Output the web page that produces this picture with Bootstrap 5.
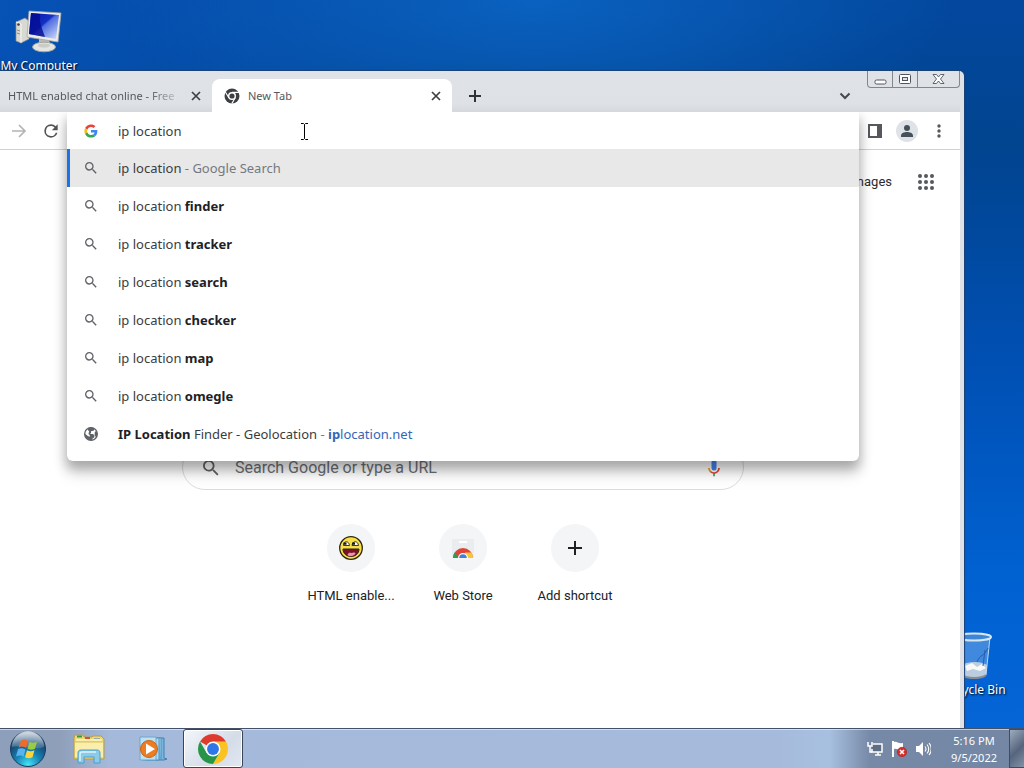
<!DOCTYPE html>
<html lang="en">
<head>
  <meta charset="UTF-8"/>
  <meta name="viewport" content="width=device-width, initial-scale=1.0"/>
  <title>New Tab</title>
  <!-- Bootstrap CSS -->
  <link
    rel="stylesheet"
    href="https://cdn.jsdelivr.net/npm/bootstrap@5.3.0/dist/css/bootstrap.min.css"
  />
  <style>
    body {
      font-family: "Noto Sans", "Open Sans", sans-serif;
      font-size: 13px;
      line-height: 20px;
      color: #202124;
      background: #0356bd;
    }
    button { color: inherit; }
    svg { display: block; flex: none; }

    /* Desktop */
    .desktop {
      background:
        radial-gradient(ellipse 420px 160px at 52% 0, rgba(12, 104, 200, .8), transparent),
        linear-gradient(to right, rgba(8, 88, 196, .6), transparent 45%),
        linear-gradient(to bottom, #03489f 0, #01448f 20%, #0050b4 50%, #0062d2 80%, #0564d6 100%);
    }
    .desk-icon {
      font-size: 12px;
      color: #fff;
      text-shadow: 1px 1px 2px #000;
      width: 78px;
    }
    .my-computer { top: 8px; left: 0; }
    .recycle-bin { right: 11px; bottom: 28px; }

    /* Browser window, pushed partly past the left screen edge */
    .browser {
      top: 71px;
      bottom: 0;
      left: -34px;
      right: 60px;
      background: #dee1e6;
      border-right: 4px solid #dee1e6;
      border-top-right-radius: 5px;
      box-shadow: 0 0 1px 1px #1c4374;
    }
    .tab-strip { height: 41px; padding-left: 6px; font-size: 11px; background: linear-gradient(#dfe2e6, #dee1e6 80%, #d5d8dd); }
    .tab { height: 33px; width: 240px; padding: 0 8px 0 12px; color: #54585c; }
    .tab.current { background: #fff; border-radius: 8px 8px 0 0; }
    .tab-title.faded {
      -webkit-mask-image: linear-gradient(to right, #000 84%, rgba(0, 0, 0, .3));
      mask-image: linear-gradient(to right, #000 84%, rgba(0, 0, 0, .3));
    }
    .icon-btn { width: 16px; height: 16px; padding: 0; border: 0; background: none; }
    .tab-search { margin-right: 14px; }
    .win-buttons { border: 1px solid #82868f; border-top: 0; border-radius: 0 0 4px 4px; height: 17px; }
    .win-buttons button { width: 25px; padding: 0; border: 0; border-right: 1px solid #82868f; background: none; }
    .win-buttons button:last-child { width: 41px; border-right: 0; }

    .toolbar { height: 38px; background: #fff; border-bottom: 1px solid #cfd1d4; padding: 0 5px 0 37px; }
    .tool-btn { width: 32px; height: 32px; padding: 0; border: 0; background: none; }
    .avatar { width: 22px; height: 22px; background: #dfe3e7; }

    /* Address box with its open suggestion list */
    .omnibox { z-index: 5; height: 37px; }
    .omni-panel {
      top: 0;
      background: #fff;
      border-radius: 0 0 6px 6px;
      box-shadow: 0 7px 12px 1px rgba(0, 0, 0, .28), 0 14px 16px rgba(0, 0, 0, .1);
      clip-path: inset(0 -30px -50px -30px);
      padding-bottom: 8px;
    }
    .omni-row { display: flex; align-items: center; width: 100%; gap: 19px; padding: 0 16px; color: #3a3c40; }
    .omni-input { height: 37px; }
    .omni-input input { border: 0; outline: 0; padding: 0; color: #3a3c40; }
    .suggestion {
      height: 38px;
      text-decoration: none;
      white-space: pre;
    }
    .suggestion b { color: #202124; }
    .suggestion.chosen { background: #e8e8e8; border-left: 3px solid #1a73e8; padding-left: 13px; }
    .suggestion .hint { color: #75797e; }
    .suggestion .site, .suggestion .site b { color: #3566b8; }

    /* New tab page */
    .ntp { background: #fff; font-family: Roboto, sans-serif; }
    .ntp-head { height: 64px; padding-right: 26px; }
    .ntp-head a { color: #2b2c2e; text-decoration: none; margin-right: 26px; }
    .search-box {
      width: 562px;
      max-width: 90%;
      height: 46px;
      margin-top: 230px;
      border: 1px solid #dadce0;
      border-radius: 24px;
      padding: 1px 19px 0 20px;
    }
    .search-box input { border: 0; outline: 0; padding: 0; font-size: 16px; background: none; }
    .search-box input::placeholder { color: #6b6f74; opacity: 1; }
    .shortcuts { margin-top: 34px; }
    .shortcut { width: 112px; color: #202124; text-decoration: none; padding: 0; border: 0; background: none; }
    .disc { width: 48px; height: 48px; background: #f3f5f6; }
    .shortcut-name { margin-top: 14px; }

    .pointer { left: 300px; top: 123px; z-index: 9; }

    /* Taskbar */
    .taskbar {
      height: 40px;
      border-top: 1px solid #435168;
      box-shadow: inset 0 1px 0 rgba(255, 255, 255, .55);
      background: linear-gradient(to right, #8d9fbb 0, #8f9fba 60px, #a5bada 110px, #a6bbdb 76%, #a8c0e0 81%, #7689a6 85%, #7386a3 100%);
      font-size: 11px;
      line-height: 17px;
      color: #fff;
    }
    .task-btn { width: 61px; padding: 0; border: 0; background: none; }
    .start-btn { width: 55px; }
    .explorer-btn { width: 67px; }
    .task-btn.running {
      width: 60px;
      border: 1px solid #39455a;
      border-radius: 3px;
      background: linear-gradient(135deg, #f4f7fb, #d4dce8 60%, #e1e8f2);
      box-shadow: inset 0 0 0 1px #fff;
    }
    .tray { gap: 8px; }
    .clock { width: 70px; }
    .show-desktop {
      width: 15px;
      padding: 0;
      border: 1px solid #3f4d62;
      border-right: 0;
      background: linear-gradient(135deg, #9eabbd, #55657d 55%, #8392a8);
    }
  </style>
</head>
<body class="vh-100 d-flex flex-column overflow-hidden">

  <!-- Shared symbols -->
  <svg width="0" height="0" class="position-absolute" aria-hidden="true">
    <symbol id="close" viewBox="0 0 16 16"><path d="M4 4l8 8M12 4l-8 8" stroke="#3c4043" stroke-width="1.700"/></symbol>
    <symbol id="lens" viewBox="0 0 24 24"><path fill="#5f6368" d="M15.500 14h-.79l-.28-.27A6.470 6.470 0 0 0 16 9.500 6.500 6.500 0 1 0 9.500 16c1.610 0 3.090-.59 4.230-1.570l.27.28v.79l5 4.990L20.490 19l-4.990-5zm-6 0C7.010 14 5 11.990 5 9.500S7.010 5 9.500 5 14 7.010 14 9.500 11.990 14 9.500 14z"/></symbol>
    <symbol id="globe" viewBox="0 0 24 24"><circle cx="12" cy="12" r="9.500" fill="#fff" stroke="#5f6368" stroke-width="2"/><path fill="#5f6368" d="M8 3c3-2 7-1 9 1l-1 3-4 1v3l-2 1h5l2 2v3l-3 2v2.500C9 22 2.500 19 2.200 11l5 4 3 1v-2l-2-2 1-4-2-2zM18 8l3 1c1 4 0 6-1.500 8l-2-3V11z"/></symbol>
  </svg>

  <main class="desktop position-relative flex-grow-1 overflow-hidden">
    <div class="desk-icon my-computer position-absolute d-flex flex-column align-items-center">
      <svg width="50" height="48" viewBox="0 0 50 48">
        <defs>
          <linearGradient id="screen" x1="0" y1="0" x2="1" y2="1"><stop offset="0" stop-color="#0613a8"/><stop offset=".45" stop-color="#1630c4"/><stop offset=".5" stop-color="#4f6ee0"/><stop offset="1" stop-color="#d6e2fb"/></linearGradient>
        </defs>
        <path d="M2 14l9-4 4 3v18L7 35l-5-2z" fill="#d9d9d4" stroke="#8c8d8c" stroke-width=".7"/>
        <path d="M2 14l5 2v19" fill="none" stroke="#fff" stroke-width=".8"/>
        <circle cx="4.500" cy="16.500" r="1.300" fill="#3b3b3b"/>
        <path d="M3 22l3 1M3 25l3 1" stroke="#8c8d8c"/>
        <path d="M25 31h10l1 6H25z" fill="#b9bbb8"/>
        <ellipse cx="30" cy="39" rx="11.500" ry="4.800" fill="#e5e5df" stroke="#a4a59f"/>
        <ellipse cx="30" cy="37.500" rx="6" ry="2" fill="#cbccc6"/>
        <path d="M15 3l32 2-3 29-31-5z" fill="#ecece6" stroke="#a4a6a2" stroke-width=".8"/>
        <path d="M17 5l28 2-3 24-27-5z" fill="url(#screen)"/>
        <path d="M17 5l9 1c-1 8 2 14 5 23l-16-3z" fill="#020c93" opacity=".8"/>
      </svg>
      <span>My Computer</span>
    </div>

    <div class="desk-icon recycle-bin position-absolute d-flex flex-column align-items-center">
      <svg width="44" height="48" viewBox="0 0 44 48">
        <path d="M6 5l4 38c4 4 20 4 24 0l4-38z" fill="#6ba4e4" fill-opacity=".6" stroke="#b8d9f6"/>
        <path d="M9 33c8-4 20-4 26 0l-1 10c-4 4-20 4-24 0z" fill="#d9dfe0" fill-opacity=".8"/>
        <path d="M13 34l7-3 5 4 5-3 4 4-6 3-7-2-6 2z" fill="#f8f9f6"/>
        <path d="M36 16c-4 9-8 6-11 14M31 34l2-16" stroke="#245fae" stroke-width="1" fill="none"/>
        <ellipse cx="22" cy="5" rx="17" ry="3.500" fill="#3e86d5" stroke="#d7e7f2" stroke-width="2"/>
        <path d="M10 43c5 4 19 4 24 0" fill="none" stroke="#8f8b8b" stroke-width="2"/>
      </svg>
      <span>Recycle Bin</span>
    </div>

    <section class="browser position-absolute d-flex flex-column">
      <!-- Tabs -->
      <div class="tab-strip d-flex align-items-end">
        <div class="tab d-flex align-items-center gap-2">
          <svg width="16" height="16" viewBox="0 0 16 16"><circle cx="8" cy="8" r="8" fill="#303236"/></svg>
          <span class="tab-title faded text-nowrap">HTML enabled chat online - Free</span>
          <button class="icon-btn ms-auto" type="button" aria-label="Close tab"><svg width="16" height="16"><use href="#close"/></svg></button>
        </div>
        <div class="tab current d-flex align-items-center gap-2">
          <svg width="16" height="16" viewBox="0 0 16 16">
            <circle cx="8" cy="8" r="7.500" fill="#3c4043"/>
            <circle cx="8" cy="8" r="4" fill="#fff"/><circle cx="8" cy="8" r="2.600" fill="#3c4043"/>
            <path d="M8 4.400h7M4.800 9.800L1.400 4M11.200 9.800L7.800 15.600" stroke="#fff" stroke-width="1.100"/>
          </svg>
          <span class="tab-title text-nowrap">New Tab</span>
          <button class="icon-btn ms-auto" type="button" aria-label="Close tab"><svg width="16" height="16"><use href="#close"/></svg></button>
        </div>
        <button class="icon-btn align-self-center ms-3 mt-2" type="button" aria-label="New tab">
          <svg width="14" height="14" viewBox="0 0 14 14"><path d="M7 1v12M1 7h12" stroke="#303236" stroke-width="2"/></svg>
        </button>
        <button class="icon-btn tab-search align-self-center ms-auto mt-2" type="button" aria-label="Search tabs">
          <svg width="16" height="16" viewBox="0 0 16 16"><path d="M3.500 5.500L8 10l4.500-4.500" fill="none" stroke="#45494d" stroke-width="2"/></svg>
        </button>
        <div class="win-buttons d-flex align-self-start">
          <button type="button" aria-label="Minimize"><svg width="24" height="16" viewBox="0 0 24 16"><rect x="7" y="9" width="11" height="4" rx="1.500" fill="#fff" stroke="#50545f"/></svg></button>
          <button type="button" aria-label="Maximize"><svg width="24" height="16" viewBox="0 0 24 16"><rect x="6.500" y="3.500" width="11" height="9" rx="1" fill="#fff" stroke="#50545f"/><rect x="9.500" y="6.500" width="5" height="3" fill="#dee1e6" stroke="#50545f"/></svg></button>
          <button type="button" aria-label="Close"><svg width="41" height="16" viewBox="0 0 41 16"><path d="M15 3.500h3.500l2 2.500 2-2.500H26L22.500 8l3.500 4.500h-3.500l-2-2.500-2 2.500H15L18.500 8z" fill="#fff" stroke="#50545f" stroke-width=".9"/></svg></button>
        </div>
      </div>

      <!-- Toolbar -->
      <div class="toolbar d-flex align-items-center">
        <button class="tool-btn d-flex align-items-center justify-content-center" type="button" aria-label="Forward">
          <svg width="16" height="16" viewBox="0 0 16 16"><path d="M1 8h13M8 2l6 6-6 6" fill="none" stroke="#b2b4b7" stroke-width="1.700"/></svg>
        </button>
        <button class="tool-btn d-flex align-items-center justify-content-center" type="button" aria-label="Reload">
          <svg width="20" height="20" viewBox="0 0 24 24"><path fill="#505458" d="M17.650 6.350A7.960 7.960 0 0 0 12 4a8 8 0 1 0 7.730 10h-2.080A6 6 0 1 1 12 6c1.660 0 3.140.69 4.220 1.780L13 11h7V4l-2.350 2.350z"/></svg>
        </button>

        <div class="omnibox position-relative flex-grow-1">
          <div class="omni-panel position-absolute start-0 end-0">
            <label class="omni-row omni-input">
              <svg width="16" height="16" viewBox="-5 -5 58 58">
                <path fill="#ea4335" d="M24 9.500c3.540 0 6.710 1.220 9.210 3.600l6.850-6.850C35.900 2.380 30.470 0 24 0 14.620 0 6.510 5.380 2.560 13.220l7.980 6.190C12.430 13.720 17.740 9.500 24 9.500z"/>
                <path fill="#4285f4" d="M46.980 24.550c0-1.570-.15-3.090-.38-4.550H24v9.020h12.940c-.58 2.960-2.260 5.480-4.780 7.180l7.730 6c4.510-4.180 7.090-10.360 7.090-17.650z"/>
                <path fill="#fbbc05" d="M10.530 28.590A14.500 14.500 0 0 1 9.770 24c0-1.600.27-3.140.76-4.590l-7.980-6.190A23.900 23.900 0 0 0 0 24c0 3.880.92 7.540 2.560 10.780l7.970-6.190z"/>
                <path fill="#34a853" d="M24 48c6.480 0 11.930-2.130 15.890-5.810l-7.730-6c-2.150 1.450-4.920 2.300-8.160 2.300-6.260 0-11.570-4.220-13.470-9.910l-7.980 6.190C6.510 42.620 14.620 48 24 48z"/>
              </svg>
              <input class="flex-grow-1" type="text" value="ip location" aria-label="Address and search bar"/>
            </label>
            <a class="omni-row suggestion chosen" href="#"><svg width="16" height="16"><use href="#lens"/></svg><span>ip location <span class="hint">- Google Search</span></span></a>
            <a class="omni-row suggestion" href="#"><svg width="16" height="16"><use href="#lens"/></svg><span>ip location <b>finder</b></span></a>
            <a class="omni-row suggestion" href="#"><svg width="16" height="16"><use href="#lens"/></svg><span>ip location <b>tracker</b></span></a>
            <a class="omni-row suggestion" href="#"><svg width="16" height="16"><use href="#lens"/></svg><span>ip location <b>search</b></span></a>
            <a class="omni-row suggestion" href="#"><svg width="16" height="16"><use href="#lens"/></svg><span>ip location <b>checker</b></span></a>
            <a class="omni-row suggestion" href="#"><svg width="16" height="16"><use href="#lens"/></svg><span>ip location <b>map</b></span></a>
            <a class="omni-row suggestion" href="#"><svg width="16" height="16"><use href="#lens"/></svg><span>ip location <b>omegle</b></span></a>
            <a class="omni-row suggestion" href="#"><svg width="16" height="16"><use href="#globe"/></svg><span><b>IP Location</b> Finder - Geolocation <span class="hint">-</span> <span class="site"><b>ip</b>location.net</span></span></a>
          </div>
        </div>

        <button class="tool-btn d-flex align-items-center justify-content-center" type="button" aria-label="Side panel">
          <svg width="14" height="14" viewBox="0 0 14 14"><path d="M1 1h12v12H1z" fill="#fff" stroke="#55585c" stroke-width="2"/><path d="M9 1h4v12H9z" fill="#55585c"/></svg>
        </button>
        <button class="tool-btn d-flex align-items-center justify-content-center" type="button" aria-label="Profile">
          <span class="avatar rounded-circle d-flex align-items-center justify-content-center">
            <svg width="14" height="14" viewBox="0 0 14 14"><circle cx="7" cy="4" r="3" fill="#46505a"/><path d="M1 13v-1.500C1 9 4.500 8 7 8s6 1 6 3.500V13z" fill="#46505a"/></svg>
          </span>
        </button>
        <button class="tool-btn d-flex align-items-center justify-content-center" type="button" aria-label="Menu">
          <svg width="4" height="14" viewBox="0 0 4 14" fill="#55585c"><circle cx="2" cy="2" r="1.700"/><circle cx="2" cy="7" r="1.700"/><circle cx="2" cy="12" r="1.700"/></svg>
        </button>
      </div>

      <!-- Page -->
      <div class="ntp flex-grow-1 d-flex flex-column align-items-center">
        <div class="ntp-head align-self-stretch d-flex align-items-center justify-content-end">
          <a href="#">Images</a>
          <button class="icon-btn" type="button" aria-label="Google apps">
            <svg width="16" height="16" viewBox="1 1 16 16" fill="#55585c"><circle cx="3" cy="3" r="2"/><circle cx="9" cy="3" r="2"/><circle cx="15" cy="3" r="2"/><circle cx="3" cy="9" r="2"/><circle cx="9" cy="9" r="2"/><circle cx="15" cy="9" r="2"/><circle cx="3" cy="15" r="2"/><circle cx="9" cy="15" r="2"/><circle cx="15" cy="15" r="2"/></svg>
          </button>
        </div>

        <label class="search-box d-flex align-items-center">
          <svg class="me-3" width="16" height="16" viewBox="3 3 18 18"><use href="#lens" width="24" height="24"/></svg>
          <input class="flex-grow-1" type="text" placeholder="Search Google or type a URL" aria-label="Search"/>
          <svg width="20" height="20" viewBox="0 0 24 24">
            <rect x="9" y="2" width="6" height="13" rx="3" fill="#4285f4"/>
            <path d="M11 18h2v4h-2z" fill="#34a853"/>
            <path d="M7 12H5c0 1.930.78 3.680 2.050 4.950l1.400-1.420A5 5 0 0 1 7 12z" fill="#f4a300"/>
            <path d="M12 17a5 5 0 0 1-3.550-1.480l-1.410 1.410A7 7 0 0 0 12 19c3.870 0 7-3.130 7-7h-2a5 5 0 0 1-5 5z" fill="#ea4335"/>
          </svg>
        </label>

        <div class="shortcuts d-flex justify-content-center">
          <a class="shortcut d-flex flex-column align-items-center" href="#">
            <span class="disc rounded-circle d-flex align-items-center justify-content-center">
              <svg width="24" height="24" viewBox="0 0 24 24">
                <circle cx="12" cy="12" r="11.300" fill="#f8df45" stroke="#2d2614" stroke-width="1.300"/>
                <path d="M4.500 9.500C4.500 4.500 10 4.500 10.500 9.500zM13 9.500c.5-5 6-5 6.500 0z" fill="#fff" stroke="#2d2614" stroke-width=".9"/>
                <path d="M4.500 6.500h3v2.300h-3zM13 6.500h3v2.300h-3z" fill="#1d190f"/>
                <path d="M4 13h16c0 10-16 10-16 0z" fill="#7b1328" stroke="#2d2614"/>
                <path d="M8.500 19c1-3 3-2 4-2s3-1.500 4 .5c-2 3-6 3.500-8 1.500z" fill="#f08fb2"/>
              </svg>
            </span>
            <span class="shortcut-name">HTML enable...</span>
          </a>
          <a class="shortcut d-flex flex-column align-items-center" href="#">
            <span class="disc rounded-circle d-flex align-items-center justify-content-center">
              <svg width="24" height="24" viewBox="0 0 24 24">
                <path d="M1 3h22v17a2 2 0 0 1-2 2H3a2 2 0 0 1-2-2z" fill="#e9edf0"/>
                <path d="M8 5h8v2H8z" fill="#fff"/>
                <path d="M2 22a10 10 0 0 1 20 0z" fill="#de4538"/>
                <path d="M2 22a10 10 0 0 1 1.800-5.700L8 22z" fill="#2e9d51"/>
                <path d="M14 16.500h6.300A10 10 0 0 1 22 22h-8z" fill="#f9c62e"/>
                <path d="M7 22a5 5 0 0 1 10 0z" fill="#fff"/>
                <path d="M8.200 22a3.800 3.800 0 0 1 7.600 0z" fill="#407fdc"/>
              </svg>
            </span>
            <span class="shortcut-name">Web Store</span>
          </a>
          <button class="shortcut d-flex flex-column align-items-center" type="button">
            <span class="disc rounded-circle d-flex align-items-center justify-content-center">
              <svg width="14" height="14" viewBox="0 0 14 14"><path d="M7 0v14M0 7h14" stroke="#202124" stroke-width="2"/></svg>
            </span>
            <span class="shortcut-name">Add shortcut</span>
          </button>
        </div>
      </div>
    </section>

    <svg class="pointer position-absolute" width="9" height="17" viewBox="0 0 9 17"><path d="M1 .5h2.500l1 1 1-1H8M4.500 1.500v14M1 16.500h2.500l1-1 1 1H8" fill="none" stroke="#000"/></svg>
  </main>

  <!-- Taskbar -->
  <footer class="taskbar d-flex flex-shrink-0">
    <button class="start-btn task-btn d-flex align-items-center justify-content-center" type="button" aria-label="Start">
      <svg width="38" height="38" viewBox="0 0 38 38">
        <defs>
          <radialGradient id="orb" cx=".5" cy=".95" r=".9"><stop offset="0" stop-color="#45e6f7"/><stop offset=".4" stop-color="#1583b5"/><stop offset=".75" stop-color="#164b77"/><stop offset="1" stop-color="#5c7d9c"/></radialGradient>
          <linearGradient id="gloss" x1="0" y1="0" x2="0" y2="1"><stop offset="0" stop-color="#fff" stop-opacity=".75"/><stop offset="1" stop-color="#fff" stop-opacity=".15"/></linearGradient>
        </defs>
        <circle cx="19" cy="19" r="17.500" fill="url(#orb)" stroke="#1c3a58"/>
        <path d="M3 17a16 16 0 0 1 32 0c-9 4-23-3-32 0z" fill="url(#gloss)"/>
        <path d="M12 11c2-2 5-1.500 7 0l-2 7c-2-1.500-5-2-7.500-.5z" fill="#ee6a2d"/>
        <path d="M20.500 11.700c2.500 1.300 5 1.200 7.500 0l-2 7c-2.500 1.300-5 1.200-7.500 0z" fill="#9acb42"/>
        <path d="M9 19.200c2.500-1.500 5.500-1 7.500.5l-2 7c-2-1.500-5-1.700-7.500-.3z" fill="#58b3ee"/>
        <path d="M18 20.300c2.500 1.400 5 1.300 7.500 0l-2 7c-2.500 1.400-5 1.300-7.500 0z" fill="#fbd33a"/>
      </svg>
    </button>
    <button class="task-btn explorer-btn d-flex align-items-center justify-content-center" type="button" aria-label="Windows Explorer">
      <svg width="34" height="30" viewBox="0 0 34 30">
        <path d="M2 4l1-3h8l1 2h8l1-1h8l3 3v20H2z" fill="#f0d878" stroke="#b79d47"/>
        <path d="M5 1.500h5v2H5z" fill="#2e9c42"/><path d="M13 3h5v2h-5z" fill="#d05434"/><path d="M22 4.500h6v2h-6z" fill="#3f7edb"/>
        <path d="M4 5h26v2H4zM3 8h28v15H3z" fill="#faeeac"/>
        <path d="M3 8h28" stroke="#d8bf5e"/>
        <path d="M6 29V19c0-2 1-3 3-3h16c2 0 3 1 3 3v10h-6v-6H12v6z" fill="#8bcbea" stroke="#4f9dc8"/>
        <path d="M8 27v-7c0-1 1-2 2-2h14" stroke="#dbf4fd" fill="none" stroke-width="1.500"/>
      </svg>
    </button>
    <button class="task-btn d-flex align-items-center justify-content-center" type="button" aria-label="Windows Media Player">
      <svg width="30" height="28" viewBox="0 0 30 28">
        <path d="M8 3h18v20l3 1-3 1H8z" fill="#79b5dc" stroke="#3e82b3"/>
        <path d="M5 3h16v22H5zM21 3h2v22" fill="#b2d9ef" stroke="#4e92bf"/>
        <path d="M2 2h16v23H2z" fill="#bde1f3" stroke="#6aa7cd"/>
        <circle cx="11" cy="14" r="8.500" fill="#ed7d23" stroke="#c66517"/>
        <path d="M8 8.500l9 5.500-9 5.500z" fill="#fff"/>
      </svg>
    </button>
    <button class="task-btn running d-flex align-items-center justify-content-center" type="button" aria-label="Google Chrome">
      <svg width="30" height="30" viewBox="0 0 48 48">
        <path d="M24 24L3.220 12A24 24 0 0 1 44.780 12z" fill="#de3b2e"/>
        <path d="M24 12h20.780A24 24 0 0 1 24 48l10.390-18z" fill="#fbc321"/>
        <path d="M34.390 30L24 48A24 24 0 0 1 3.220 12l10.390 18z" fill="#279547"/>
        <circle cx="24" cy="24" r="12" fill="#fff"/><circle cx="24" cy="24" r="9.500" fill="#2f76e6"/>
      </svg>
    </button>

    <div class="tray d-flex align-items-center ms-auto">
      <svg width="16" height="16" viewBox="0 0 16 16"><path d="M6 3h9v8H5V8" fill="#5e6e84" stroke="#fff" stroke-width="1.500"/><path d="M8 14h6M11 11v3M1 1v4h4V1M3 5v6h2" fill="none" stroke="#fff" stroke-width="1.500"/></svg>
      <svg width="16" height="16" viewBox="0 0 16 16"><path d="M1 0h2v16H1z" fill="#fff"/><path d="M3 1c3-1 4 2 9 1v7c-4 1-6-2-9-1z" fill="#fff"/><circle cx="11" cy="11" r="4.700" fill="#d92d2c" stroke="#9d2320" stroke-width=".6"/><path d="M9 9l4 4M13 9l-4 4" stroke="#fff" stroke-width="1.500"/></svg>
      <svg width="16" height="16" viewBox="0 0 16 16"><path d="M1 5h3l4-4v14l-4-4H1z" fill="#fff"/><path d="M10 5.500c1.200 1.500 1.200 3.500 0 5M12 3.500c2.300 2.500 2.300 6.500 0 9M14 2c3 3.500 3 8.500 0 12" fill="none" stroke="#fff" stroke-width="1.100"/></svg>
      <div class="clock text-center">
        <div>5:16 PM</div>
        <div>9/5/2022</div>
      </div>
    </div>
    <button class="show-desktop" type="button" aria-label="Show desktop"></button>
  </footer>

  <!-- Bootstrap JS -->
  <script
    src="https://cdn.jsdelivr.net/npm/bootstrap@5.3.0/dist/js/bootstrap.bundle.min.js">
  </script>
</body>
</html>
